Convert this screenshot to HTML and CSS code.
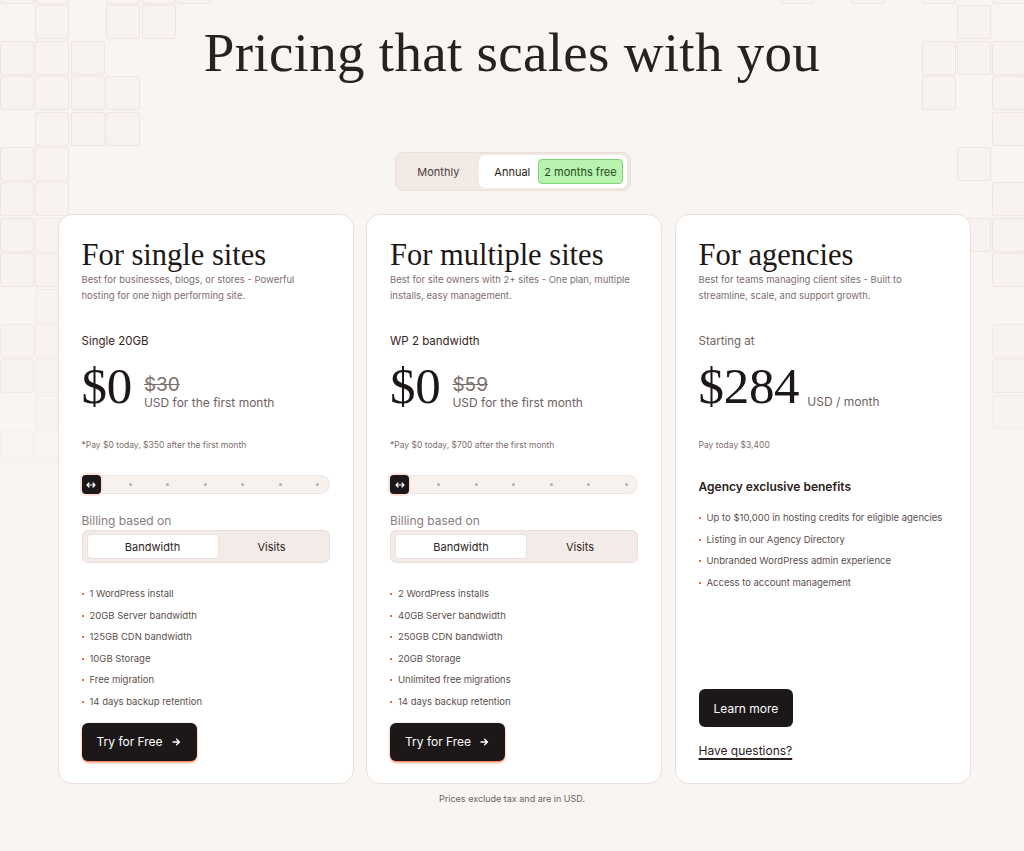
FILE: index.html
```html
<!DOCTYPE html>
<html lang="en">
<head>
<meta charset="utf-8">
<title>Pricing</title>
<link rel="stylesheet" href="styles.css">
</head>
<body>
<div class="page">
  <div class="tiles tiles-left" aria-hidden="true">
    <i class="t"></i><i class="t"></i><i class="e"></i><i class="t"></i><i class="t"></i><i class="t"></i>
    <i class="e"></i><i class="t"></i><i class="e"></i><i class="t"></i><i class="t"></i><i class="e"></i>
    <i class="t"></i><i class="t"></i><i class="t"></i><i class="e"></i><i class="e"></i><i class="e"></i>
    <i class="t"></i><i class="t"></i><i class="t"></i><i class="t"></i><i class="e"></i><i class="e"></i>
    <i class="e"></i><i class="t"></i><i class="t"></i><i class="t"></i><i class="e"></i><i class="e"></i>
    <i class="t"></i><i class="t"></i><i class="e"></i><i class="e"></i><i class="e"></i><i class="e"></i>
    <i class="t"></i><i class="t"></i><i class="e"></i><i class="e"></i><i class="e"></i><i class="e"></i>
    <i class="t"></i><i class="t f1"></i><i class="e"></i><i class="e"></i><i class="e"></i><i class="e"></i>
    <i class="t"></i><i class="t"></i><i class="e"></i><i class="e"></i><i class="e"></i><i class="e"></i>
    <i class="e"></i><i class="t f1"></i><i class="e"></i><i class="e"></i><i class="e"></i><i class="e"></i>
    <i class="t f1"></i><i class="t f1"></i><i class="e"></i><i class="e"></i><i class="e"></i><i class="e"></i>
    <i class="t f1"></i><i class="t f2"></i><i class="e"></i><i class="e"></i><i class="e"></i><i class="e"></i>
    <i class="e"></i><i class="t f2"></i><i class="e"></i><i class="e"></i><i class="e"></i><i class="e"></i>
    <i class="t f3"></i><i class="t f3"></i><i class="e"></i><i class="e"></i><i class="e"></i><i class="e"></i>
  </div>
  <div class="tiles tiles-right" aria-hidden="true">
    <i class="t"></i><i class="e"></i><i class="t"></i><i class="e"></i><i class="t"></i><i class="e"></i><i class="t"></i>
    <i class="e"></i><i class="e"></i><i class="e"></i><i class="e"></i><i class="e"></i><i class="t"></i><i class="e"></i>
    <i class="e"></i><i class="e"></i><i class="e"></i><i class="e"></i><i class="t"></i><i class="t"></i><i class="t"></i>
    <i class="e"></i><i class="e"></i><i class="e"></i><i class="e"></i><i class="t"></i><i class="e"></i><i class="t"></i>
    <i class="e"></i><i class="e"></i><i class="e"></i><i class="e"></i><i class="e"></i><i class="e"></i><i class="t"></i>
    <i class="e"></i><i class="e"></i><i class="e"></i><i class="e"></i><i class="e"></i><i class="t"></i><i class="e"></i>
    <i class="e"></i><i class="e"></i><i class="e"></i><i class="e"></i><i class="e"></i><i class="e"></i><i class="t"></i>
    <i class="e"></i><i class="e"></i><i class="e"></i><i class="e"></i><i class="e"></i><i class="t"></i><i class="t"></i>
    <i class="e"></i><i class="e"></i><i class="e"></i><i class="e"></i><i class="e"></i><i class="e"></i><i class="t"></i>
    <i class="e"></i><i class="e"></i><i class="e"></i><i class="e"></i><i class="e"></i><i class="e"></i><i class="e"></i>
    <i class="e"></i><i class="e"></i><i class="e"></i><i class="e"></i><i class="e"></i><i class="e"></i><i class="t f1"></i>
    <i class="e"></i><i class="e"></i><i class="e"></i><i class="e"></i><i class="e"></i><i class="e"></i><i class="t f1"></i>
    <i class="e"></i><i class="e"></i><i class="e"></i><i class="e"></i><i class="e"></i><i class="e"></i><i class="t f2"></i>
  </div>

  <main class="content">
    <h1 class="title">Pricing that scales with you</h1>

    <div class="period">
      <span class="period-opt">Monthly</span>
      <span class="period-active">
        <span class="period-opt dark">Annual</span>
        <span class="badge">2 months free</span>
      </span>
    </div>

    <section class="cards">
      <article class="card">
        <h2 class="card-title">For single sites</h2>
        <p class="card-desc">Best for businesses, blogs, or stores - Powerful hosting for one high performing site.</p>
        <p class="plan-name">Single 20GB</p>
        <div class="price-row">
          <span class="price">$0</span>
          <span class="price-meta">
            <s class="old">$30</s>
            <span class="per">USD for the first month</span>
          </span>
        </div>
        <p class="note">*Pay $0 today, $350 after the first month</p>
        <div class="slider">
          <span class="thumb"><svg width="10" height="6" viewBox="0 0 10 6"><path d="M1 3h8M3 1 1 3l2 2M7 1l2 2-2 2" fill="none" stroke="#fff" stroke-width="1.2" stroke-linecap="round" stroke-linejoin="round"/></svg></span>
          <span class="dots"><i></i><i></i><i></i><i></i><i></i><i></i></span>
        </div>
        <p class="billing">Billing based on</p>
        <div class="seg">
          <span class="seg-opt on">Bandwidth</span>
          <span class="seg-opt">Visits</span>
        </div>
        <ul class="features">
          <li>1 WordPress install</li>
          <li>20GB Server bandwidth</li>
          <li>125GB CDN bandwidth</li>
          <li>10GB Storage</li>
          <li>Free migration</li>
          <li>14 days backup retention</li>
        </ul>
        <a class="btn glow" href="#">Try for Free <svg width="9" height="8" viewBox="0 0 9 8"><path d="M1 4h6.5M4.6 1.2 7.5 4 4.6 6.8" fill="none" stroke="#fff" stroke-width="1.3" stroke-linecap="round" stroke-linejoin="round"/></svg></a>
      </article>

      <article class="card">
        <h2 class="card-title">For multiple sites</h2>
        <p class="card-desc">Best for site owners with 2+ sites - One plan, multiple installs, easy management.</p>
        <p class="plan-name">WP 2 bandwidth</p>
        <div class="price-row">
          <span class="price">$0</span>
          <span class="price-meta">
            <s class="old">$59</s>
            <span class="per">USD for the first month</span>
          </span>
        </div>
        <p class="note">*Pay $0 today, $700 after the first month</p>
        <div class="slider">
          <span class="thumb"><svg width="10" height="6" viewBox="0 0 10 6"><path d="M1 3h8M3 1 1 3l2 2M7 1l2 2-2 2" fill="none" stroke="#fff" stroke-width="1.2" stroke-linecap="round" stroke-linejoin="round"/></svg></span>
          <span class="dots"><i></i><i></i><i></i><i></i><i></i><i></i></span>
        </div>
        <p class="billing">Billing based on</p>
        <div class="seg">
          <span class="seg-opt on">Bandwidth</span>
          <span class="seg-opt">Visits</span>
        </div>
        <ul class="features">
          <li>2 WordPress installs</li>
          <li>40GB Server bandwidth</li>
          <li>250GB CDN bandwidth</li>
          <li>20GB Storage</li>
          <li>Unlimited free migrations</li>
          <li>14 days backup retention</li>
        </ul>
        <a class="btn glow" href="#">Try for Free <svg width="9" height="8" viewBox="0 0 9 8"><path d="M1 4h6.5M4.6 1.2 7.5 4 4.6 6.8" fill="none" stroke="#fff" stroke-width="1.3" stroke-linecap="round" stroke-linejoin="round"/></svg></a>
      </article>

      <article class="card">
        <h2 class="card-title">For agencies</h2>
        <p class="card-desc">Best for teams managing client sites - Built to streamline, scale, and support growth.</p>
        <p class="plan-name muted">Starting at</p>
        <div class="price-row">
          <span class="price">$284</span>
          <span class="price-meta low">
            <span class="per">USD / month</span>
          </span>
        </div>
        <p class="note">Pay today $3,400</p>
        <p class="benefits-title">Agency exclusive benefits</p>
        <ul class="features benefits">
          <li>Up to $10,000 in hosting credits for eligible agencies</li>
          <li>Listing in our Agency Directory</li>
          <li>Unbranded WordPress admin experience</li>
          <li>Access to account management</li>
        </ul>
        <div class="card-foot">
          <a class="btn" href="#">Learn more</a>
          <a class="link" href="#">Have questions?</a>
        </div>
      </article>
    </section>

    <p class="footnote">Prices exclude tax and are in USD.</p>
  </main>
</div>
</body>
</html>
```

FILE: styles.css
```css
* { box-sizing: border-box; }

html, body {
  margin: 0;
  padding: 0;
}

body {
  background: #f9f5f2;
  font-family: Inter, "Noto Sans", sans-serif;
  color: #1d1716;
  overflow-x: hidden;
}

.page {
  position: relative;
  min-height: 851px;
  overflow: hidden;
}

/* decorative tile background */
.tiles {
  position: absolute;
  top: -30px;
  display: grid;
  grid-auto-rows: 34px;
  gap: 1.4px;
  z-index: 0;
}
.tiles-left {
  left: 0;
  grid-template-columns: repeat(6, 34px);
}
.tiles-right {
  left: 780px;
  grid-template-columns: repeat(7, 34px);
}
.tiles i {
  display: block;
  width: 34px;
  height: 34px;
  border-radius: 3px;
}
.tiles .t {
  border: 1px solid #f0e6e1;
  background: #f8f3f0;
  box-shadow: 0 0 1px rgba(220, 200, 190, 0.3);
}
.tiles .f1 { opacity: 0.75; }
.tiles .f2 { opacity: 0.5; }
.tiles .f3 { opacity: 0.3; }

.content {
  position: relative;
  z-index: 1;
  display: flex;
  flex-direction: column;
  align-items: center;
  padding-top: 21px;
}

.title {
  margin: 0;
  font-family: "Liberation Serif", "DejaVu Serif", serif;
  font-weight: 400;
  font-size: 55px;
  line-height: 64px;
  letter-spacing: 0.3px;
  color: #272120;
}

.period {
  margin-top: 67px;
  margin-left: 2px;
  display: flex;
  align-items: center;
  height: 39px;
  padding: 3px;
  background: #f2e9e5;
  border: 1px solid #eadfd9;
  border-radius: 8px;
}
.period-opt {
  font-size: 11px;
  color: #4a3f3e;
  padding: 0 20px 0 18px;
}
.period-opt.dark { color: #2a2221; padding: 0 8px 0 15px; }
.period-active {
  display: flex;
  align-items: center;
  height: 33px;
  padding: 0 4px 0 0;
  background: #fff;
  border-radius: 6px;
}
.badge {
  font-size: 11px;
  color: #1f4a1d;
  background: #b9f3b0;
  border: 1px solid #7fd77a;
  border-radius: 4px;
  padding: 0 5px;
  height: 25px;
  display: flex;
  align-items: center;
}

.cards {
  margin-top: 23px;
  margin-left: 4px;
  display: grid;
  grid-template-columns: repeat(3, 296px);
  gap: 12.5px;
}

.card {
  display: flex;
  flex-direction: column;
  height: 570px;
  padding: 23px 23px 22px;
  background: #fff;
  border: 1px solid #ecdfd8;
  border-radius: 14px;
}

.card-title {
  margin: 0;
  font-family: "Liberation Serif", "DejaVu Serif", serif;
  font-weight: 400;
  font-size: 30.5px;
  line-height: 34px;
  color: #1d1716;
}

.card-desc {
  margin: 0;
  font-size: 9.5px;
  line-height: 16px;
  color: #7d6e6c;
}

.plan-name {
  margin: 29px 0 0;
  font-size: 11.5px;
  line-height: 16px;
  color: #3b2320;
}
.plan-name.muted { color: #6f6260; }

.price-row {
  margin-top: 12px;
  display: flex;
  align-items: center;
  height: 50px;
}
.price {
  font-family: "Liberation Serif", "DejaVu Serif", serif;
  font-size: 51px;
  line-height: 50px;
  color: #1d1716;
  letter-spacing: -0.3px;
}
.price-meta {
  display: flex;
  flex-direction: column;
  margin-left: 12px;
  padding-top: 14px;
}
.price-meta.low { padding-top: 32px; margin-left: 8px; }
.old {
  font-size: 19px;
  line-height: 20px;
  color: #7d6e6c;
}
.per {
  font-size: 12px;
  line-height: 16px;
  color: #6f6260;
}

.note {
  margin: 28px 0 0;
  font-size: 8.5px;
  line-height: 12px;
  color: #7d6e6c;
}

.slider {
  margin-top: 24px;
  display: flex;
  align-items: center;
  height: 19px;
  background: #f8f2ef;
  border: 1px solid #efe4de;
  border-radius: 10px;
}
.thumb {
  width: 19px;
  height: 19px;
  margin: 0 0 0 -1px;
  display: flex;
  align-items: center;
  justify-content: center;
  background: #1c1718;
  border-radius: 4px;
  box-shadow: 0 0 0 2px #fbe3dc;
}
.dots {
  flex: 1;
  display: flex;
  justify-content: space-between;
  padding: 0 9px 0 28px;
}
.dots i {
  width: 3px;
  height: 3px;
  border-radius: 50%;
  background: #b9aeab;
}

.billing {
  margin: 19px 0 0;
  font-size: 12px;
  line-height: 16px;
  color: #8a7c7a;
}
.seg {
  margin-top: 1px;
  display: flex;
  height: 33px;
  padding: 3px 4px;
  background: #f3ebe7;
  border: 1px solid #eadfd9;
  border-radius: 6px;
}
.seg-opt {
  flex: 1;
  display: flex;
  align-items: center;
  justify-content: center;
  font-size: 11px;
  color: #2e2424;
}
.seg-opt.on {
  flex: 0 0 132px;
  background: #fff;
  border-radius: 4px;
  border: 1px solid #ece2dd;
}

.features {
  list-style: none;
  margin: 20px 0 0;
  padding: 0;
}
.features li {
  position: relative;
  padding-left: 8px;
  font-size: 9.5px;
  line-height: 21.6px;
  color: #5c4f4d;
}
.features li::before {
  content: "";
  position: absolute;
  left: 0;
  top: 10px;
  width: 2px;
  height: 2px;
  background: #e06a4a;
}

.btn {
  align-self: flex-start;
  display: inline-flex;
  align-items: center;
  gap: 9px;
  margin-top: 10px;
  height: 38px;
  padding: 0 16px 0 15px;
  background: #1c1718;
  color: #fff;
  font-size: 12px;
  text-decoration: none;
  border-radius: 6px;
}
.btn.glow {
  box-shadow: 0 2px 3px -1px #ff4f12, 0 0 2px rgba(255, 90, 30, 0.35);
}

.benefits-title {
  margin: 28px 0 0;
  font-size: 12px;
  line-height: 16px;
  font-weight: 600;
  color: #2a2020;
}
.benefits { margin-top: 12px; }

.card-foot {
  margin-top: auto;
  display: flex;
  flex-direction: column;
  align-items: flex-start;
}
.card-foot .btn { margin: 0 0 16px; height: 38px; padding: 0 15px; }
.link {
  font-size: 12px;
  line-height: 16px;
  color: #2a2020;
  text-decoration: underline;
  text-decoration-thickness: 2px;
  text-underline-offset: 3px;
  margin-bottom: 2px;
}

.footnote {
  margin: 9px 0 0;
  font-size: 9px;
  line-height: 12px;
  color: #6f6260;
}
```
